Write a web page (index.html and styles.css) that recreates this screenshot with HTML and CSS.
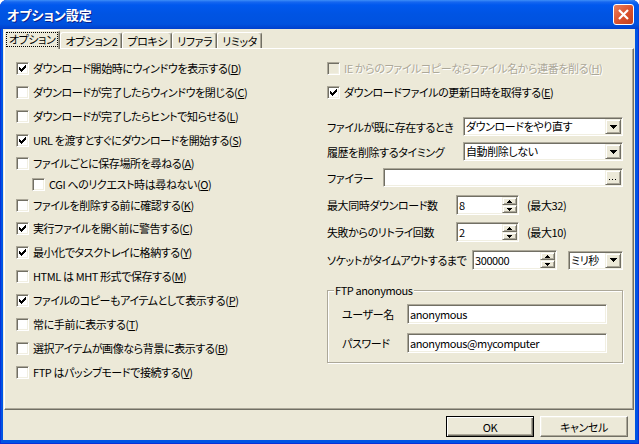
FILE: index.html
```html
<!DOCTYPE html>
<html lang="ja">
<head>
    <meta charset="UTF-8">
    <meta name="viewport" content="width=device-width, initial-scale=1.0">
    <title>オプション設定</title>
    <link rel="stylesheet" href="styles.css">
</head>
<body>
    <div class="window">
        <div class="titleBar">
            <span class="titleText">オプション設定</span>
            <div class="closeButton">
                <svg width="19" height="19" viewBox="0 0 19 19">
                    <path d="M5 5L14 14M14 5L5 14" stroke="#fff" stroke-width="2.2"/>
                </svg>
            </div>
        </div>

        <div class="client">
            <div class="tabStrip">
                <div class="tab selected"><span class="focusRect">オプション</span></div>
                <div class="tab">オプション2</div>
                <div class="tab">プロキシ</div>
                <div class="tab">リファラ</div>
                <div class="tab">リミッタ</div>
            </div>

            <div class="tabPanel">
                <div class="leftColumn">
                    <div class="checkRow">
                        <span class="checkBox"><svg class="checkMark" width="7" height="7" viewBox="0 0 7 7"><path d="M0 2h1v3H0zM1 3h1v3H1zM2 4h1v3H2zM3 3h1v3H3zM4 2h1v3H4zM5 1h1v3H5zM6 0h1v3H6z"/></svg></span>
                        <span class="checkText">ダウンロード開始時にウィンドウを表示する(<u>D</u>)</span>
                    </div>
                    <div class="checkRow">
                        <span class="checkBox"></span>
                        <span class="checkText">ダウンロードが完了したらウィンドウを閉じる(<u>C</u>)</span>
                    </div>
                    <div class="checkRow">
                        <span class="checkBox"></span>
                        <span class="checkText">ダウンロードが完了したらヒントで知らせる(<u>L</u>)</span>
                    </div>
                    <div class="checkRow">
                        <span class="checkBox"><svg class="checkMark" width="7" height="7" viewBox="0 0 7 7"><path d="M0 2h1v3H0zM1 3h1v3H1zM2 4h1v3H2zM3 3h1v3H3zM4 2h1v3H4zM5 1h1v3H5zM6 0h1v3H6z"/></svg></span>
                        <span class="checkText">URL を渡すとすぐにダウンロードを開始する(<u>S</u>)</span>
                    </div>
                    <div class="checkRow shortRow">
                        <span class="checkBox"></span>
                        <span class="checkText">ファイルごとに保存場所を尋ねる(<u>A</u>)</span>
                    </div>
                    <div class="checkRow subRow">
                        <span class="checkBox"></span>
                        <span class="checkText">CGI へのリクエスト時は尋ねない(<u>O</u>)</span>
                    </div>
                    <div class="checkRow shortRow">
                        <span class="checkBox"></span>
                        <span class="checkText">ファイルを削除する前に確認する(<u>K</u>)</span>
                    </div>
                    <div class="checkRow">
                        <span class="checkBox"><svg class="checkMark" width="7" height="7" viewBox="0 0 7 7"><path d="M0 2h1v3H0zM1 3h1v3H1zM2 4h1v3H2zM3 3h1v3H3zM4 2h1v3H4zM5 1h1v3H5zM6 0h1v3H6z"/></svg></span>
                        <span class="checkText">実行ファイルを開く前に警告する(<u>C</u>)</span>
                    </div>
                    <div class="checkRow">
                        <span class="checkBox"><svg class="checkMark" width="7" height="7" viewBox="0 0 7 7"><path d="M0 2h1v3H0zM1 3h1v3H1zM2 4h1v3H2zM3 3h1v3H3zM4 2h1v3H4zM5 1h1v3H5zM6 0h1v3H6z"/></svg></span>
                        <span class="checkText">最小化でタスクトレイに格納する(<u>Y</u>)</span>
                    </div>
                    <div class="checkRow">
                        <span class="checkBox"></span>
                        <span class="checkText">HTML は MHT 形式で保存する(<u>M</u>)</span>
                    </div>
                    <div class="checkRow">
                        <span class="checkBox"><svg class="checkMark" width="7" height="7" viewBox="0 0 7 7"><path d="M0 2h1v3H0zM1 3h1v3H1zM2 4h1v3H2zM3 3h1v3H3zM4 2h1v3H4zM5 1h1v3H5zM6 0h1v3H6z"/></svg></span>
                        <span class="checkText">ファイルのコピーもアイテムとして表示する(<u>P</u>)</span>
                    </div>
                    <div class="checkRow">
                        <span class="checkBox"></span>
                        <span class="checkText">常に手前に表示する(<u>T</u>)</span>
                    </div>
                    <div class="checkRow">
                        <span class="checkBox"></span>
                        <span class="checkText">選択アイテムが画像なら背景に表示する(<u>B</u>)</span>
                    </div>
                    <div class="checkRow">
                        <span class="checkBox"></span>
                        <span class="checkText">FTP はパッシブモードで接続する(<u>V</u>)</span>
                    </div>
                </div>

                <div class="rightColumn">
                    <div class="checkRow disabled">
                        <span class="checkBox"></span>
                        <span class="checkText">IE からのファイルコピーならファイル名から連番を削る(<u>H</u>)</span>
                    </div>
                    <div class="checkRow">
                        <span class="checkBox"><svg class="checkMark" width="7" height="7" viewBox="0 0 7 7"><path d="M0 2h1v3H0zM1 3h1v3H1zM2 4h1v3H2zM3 3h1v3H3zM4 2h1v3H4zM5 1h1v3H5zM6 0h1v3H6z"/></svg></span>
                        <span class="checkText">ダウンロードファイルの更新日時を取得する(<u>E</u>)</span>
                    </div>

                    <div class="fieldRow existRow">
                        <span class="fieldLabel">ファイルが既に存在するとき</span>
                        <div class="comboBox sunken">
                            <span class="boxText">ダウンロードをやり直す</span>
                            <span class="dropButton raised"><svg width="7" height="4" viewBox="0 0 7 4"><path d="M0 0h7v1H6v1H5v1H4v1H3V3H2V2H1V1H0z"/></svg></span>
                        </div>
                    </div>
                    <div class="fieldRow historyRow">
                        <span class="fieldLabel">履歴を削除するタイミング</span>
                        <div class="comboBox sunken">
                            <span class="boxText">自動削除しない</span>
                            <span class="dropButton raised"><svg width="7" height="4" viewBox="0 0 7 4"><path d="M0 0h7v1H6v1H5v1H4v1H3V3H2V2H1V1H0z"/></svg></span>
                        </div>
                    </div>
                    <div class="fieldRow filerRow">
                        <span class="fieldLabel">ファイラー</span>
                        <div class="filerBox sunken">
                            <span class="boxText"></span>
                            <span class="dropButton raised"><svg width="8" height="2" viewBox="0 0 8 2"><path d="M0 0h1v1H0zM3 0h1v1H3zM6 0h1v1H6z"/></svg></span>
                        </div>
                    </div>

                    <div class="fieldRow spinRow firstSpin">
                        <span class="fieldLabel countLabel">最大同時ダウンロード数</span>
                        <div class="spinBox countSpin sunken">
                            <span class="boxText">8</span>
                            <span class="spinButtons">
                                <span class="spinHalf raised"><svg width="5" height="3" viewBox="0 0 5 3"><path d="M2 0h1v1h1v1h1v1H0V2h1V1h1z"/></svg></span>
                                <span class="spinHalf raised"><svg width="5" height="3" viewBox="0 0 5 3"><path d="M0 0h5v1H4v1H3v1H2V2H1V1H0z"/></svg></span>
                            </span>
                        </div>
                        <span class="spinNote">(最大32)</span>
                    </div>
                    <div class="fieldRow spinRow">
                        <span class="fieldLabel countLabel">失敗からのリトライ回数</span>
                        <div class="spinBox countSpin sunken">
                            <span class="boxText">2</span>
                            <span class="spinButtons">
                                <span class="spinHalf raised"><svg width="5" height="3" viewBox="0 0 5 3"><path d="M2 0h1v1h1v1h1v1H0V2h1V1h1z"/></svg></span>
                                <span class="spinHalf raised"><svg width="5" height="3" viewBox="0 0 5 3"><path d="M0 0h5v1H4v1H3v1H2V2H1V1H0z"/></svg></span>
                            </span>
                        </div>
                        <span class="spinNote">(最大10)</span>
                    </div>
                    <div class="fieldRow spinRow timeoutRow">
                        <span class="fieldLabel timeoutLabel">ソケットがタイムアウトするまで</span>
                        <div class="spinBox timeoutSpin sunken">
                            <span class="boxText">300000</span>
                            <span class="spinButtons">
                                <span class="spinHalf raised"><svg width="5" height="3" viewBox="0 0 5 3"><path d="M2 0h1v1h1v1h1v1H0V2h1V1h1z"/></svg></span>
                                <span class="spinHalf raised"><svg width="5" height="3" viewBox="0 0 5 3"><path d="M0 0h5v1H4v1H3v1H2V2H1V1H0z"/></svg></span>
                            </span>
                        </div>
                        <div class="comboBox unitCombo sunken">
                            <span class="boxText">ミリ秒</span>
                            <span class="dropButton raised"><svg width="7" height="4" viewBox="0 0 7 4"><path d="M0 0h7v1H6v1H5v1H4v1H3V3H2V2H1V1H0z"/></svg></span>
                        </div>
                    </div>

                    <div class="groupBox">
                        <div class="groupTitle">FTP anonymous</div>
                        <div class="groupRow">
                            <span class="groupLabel">ユーザー名</span>
                            <div class="editBox sunken"><span class="boxText">anonymous</span></div>
                        </div>
                        <div class="groupRow">
                            <span class="groupLabel">パスワード</span>
                            <div class="editBox sunken"><span class="boxText">anonymous@mycomputer</span></div>
                        </div>
                    </div>
                </div>
            </div>

            <div class="buttonRow">
                <div class="pushButton defaultButton">OK</div>
                <div class="pushButton">キャンセル</div>
            </div>
        </div>
    </div>
</body>
</html>
```

FILE: styles.css
```css
body {
    margin: 0;
    width: 639px;
    height: 444px;
    overflow: hidden;
    background-color: #fff;
    font-family: "Noto Sans CJK JP", "Noto Sans", sans-serif;
    font-size: 11px;
    letter-spacing: -0.4px;
    font-feature-settings: "palt";
    color: #000;
}

.window {
    display: flex;
    flex-direction: column;
    height: 444px;
    background-color: #0054e3;
    border-radius: 7px 7px 0 0;
    overflow: hidden;
    box-shadow: inset 1px 0 #0831d9, inset -1px 0 #0831d9, inset 0 -1px #0831d9;
}

.titleBar {
    display: flex;
    align-items: center;
    flex: none;
    height: 29px;
    padding: 0 5px 0 7px;
    background: linear-gradient(#3d8ef8 0, #1667f0 2px, #0058ee 5px, #0054e3 14px, #0052df 24px, #003fcc 29px);
}

.titleText {
    color: #fff;
    font-size: 13px;
    font-weight: bold;
    letter-spacing: 0;
    line-height: 16px;
    text-shadow: 1px 1px #0a1f8a;
}

.closeButton {
    margin-left: auto;
    width: 21px;
    height: 21px;
    box-sizing: border-box;
    border: 1px solid #fff;
    border-radius: 3px;
    background: linear-gradient(135deg, #e9805e, #d9502c 55%, #c4401c);
    display: flex;
    align-items: center;
    justify-content: center;
}

.client {
    flex: 1;
    display: flex;
    flex-direction: column;
    margin: 0 4px 4px 3px;
    padding: 1px 1px 0 1px;
    background-color: #ece9d8;
}

/* tabs */
.tabStrip {
    display: flex;
    align-items: flex-end;
    height: 18px;
    position: relative;
    z-index: 1;
}

.tab {
    display: flex;
    align-items: center;
    height: 16px;
    box-sizing: border-box;
    padding: 0 4px 0 4px;
    border: 1px solid;
    border-color: #fff #716f64 transparent #fff;
    border-bottom: none;
    border-radius: 3px 3px 0 0;
    box-shadow: inset -1px 0 #aca899;
    background-color: #ece9d8;
    line-height: 14px;
}

.tab.selected {
    height: 19px;
    margin-bottom: -1px;
    padding: 0 2px 1px 2px;
}

.focusRect {
    padding: 0 2px;
    outline: 1px dotted #000;
    outline-offset: 0;
    line-height: 13px;
}

.tabPanel {
    flex: 1;
    display: flex;
    padding: 7px 10px 0 11px;
    border: 1px solid;
    border-color: #fff #716f64 #716f64 #fff;
    box-shadow: inset -1px -1px #aca899;
}

.leftColumn {
    width: 311px;
    flex: none;
}

.rightColumn {
    width: 296px;
    flex: none;
    display: flex;
    flex-direction: column;
}

/* check boxes */
.checkRow {
    display: flex;
    align-items: center;
    gap: 4px;
    height: 24px;
    white-space: nowrap;
}

.checkRow.shortRow {
    height: 22px;
}

.checkRow.subRow {
    height: 20px;
    padding-left: 16px;
}

.checkText {
    line-height: 14px;
}

.checkBox {
    flex: none;
    width: 13px;
    height: 13px;
    box-sizing: border-box;
    display: flex;
    align-items: center;
    justify-content: center;
    border: 1px solid;
    border-color: #aca899 #fff #fff #aca899;
    box-shadow: inset 1px 1px #716f64, inset -1px -1px #f1efe2;
    background-color: #fff;
}

.checkMark {
    display: block;
    shape-rendering: crispEdges;
}

.disabled .checkBox {
    background-color: #ece9d8;
}

.disabled .checkText {
    color: #aca899;
    text-shadow: 1px 1px #fff;
}

/* sunken and raised edges */
.sunken {
    box-sizing: border-box;
    padding: 1px;
    border: 1px solid;
    border-color: #aca899 #fff #fff #aca899;
    box-shadow: inset 1px 1px #716f64, inset -1px -1px #f1efe2;
    background-color: #fff;
}

.raised {
    box-sizing: border-box;
    border: 1px solid;
    border-color: #f1efe2 #716f64 #716f64 #f1efe2;
    box-shadow: inset 1px 1px #fff, inset -1px -1px #aca899;
    background-color: #ece9d8;
}

.raised svg {
    display: block;
    shape-rendering: crispEdges;
}

/* right column fields */
.fieldRow {
    display: flex;
    align-items: center;
    height: 19px;
    white-space: nowrap;
}

.fieldLabel {
    line-height: 14px;
}

.existRow {
    margin-top: 13px;
}

.historyRow {
    margin-top: 6px;
}

.filerRow {
    margin-top: 7px;
}

.spinRow {
    height: 20px;
    margin-top: 7px;
}

.spinRow.firstSpin,
.spinRow.timeoutRow {
    margin-top: 8px;
}

.comboBox,
.filerBox {
    display: flex;
    margin-left: auto;
    width: 160px;
    height: 19px;
}

.filerBox {
    width: 240px;
}

.comboBox.unitCombo {
    width: 55px;
}

.boxText {
    flex: 1;
    padding-left: 1px;
    line-height: 15px;
    overflow: hidden;
}

.dropButton {
    flex: none;
    width: 16px;
    height: 15px;
    display: flex;
    align-items: center;
    justify-content: center;
}

.filerBox .dropButton {
    align-items: flex-end;
    padding-bottom: 3px;
}

.countLabel {
    width: 129px;
}

.timeoutLabel {
    width: 145px;
}

.spinBox {
    display: flex;
    height: 20px;
}

.spinBox .boxText {
    line-height: 16px;
}

.countSpin {
    width: 63px;
}

.timeoutSpin {
    width: 85px;
}

.spinButtons {
    flex: none;
    width: 15px;
    display: flex;
    flex-direction: column;
}

.spinHalf {
    height: 8px;
    display: flex;
    align-items: center;
    justify-content: center;
}

.spinNote {
    margin-left: 8px;
    line-height: 14px;
}

/* ftp group */
.groupBox {
    margin-top: 20px;
    padding: 0 0 9px 14px;
    border: 1px solid #aca899;
    box-shadow: inset 1px 1px #fff, 1px 1px #fff;
}

.groupTitle {
    width: fit-content;
    margin: -8px 0 0 -8px;
    padding: 0 1px;
    line-height: 14px;
    background-color: #ece9d8;
}

.groupRow {
    display: flex;
    align-items: center;
    height: 20px;
    margin-top: 7px;
}

.groupRow + .groupRow {
    margin-top: 9px;
}

.groupLabel {
    width: 65px;
    line-height: 14px;
}

.editBox {
    display: flex;
    width: 200px;
    height: 20px;
}

.editBox .boxText {
    line-height: 16px;
}

/* dialog buttons */
.buttonRow {
    display: flex;
    justify-content: flex-end;
    gap: 6px;
    padding: 6px 6px 3px 0;
}

.pushButton {
    width: 88px;
    height: 21px;
    box-sizing: border-box;
    display: flex;
    align-items: center;
    justify-content: center;
    border: 1px solid;
    border-color: #fff #716f64 #716f64 #fff;
    box-shadow: inset -1px -1px #aca899, inset 1px 1px #f1efe2;
    line-height: 14px;
}

.pushButton.defaultButton {
    border-color: #000;
    box-shadow: inset 1px 1px #fff, inset -1px -1px #716f64, inset -2px -2px #aca899;
}
```
